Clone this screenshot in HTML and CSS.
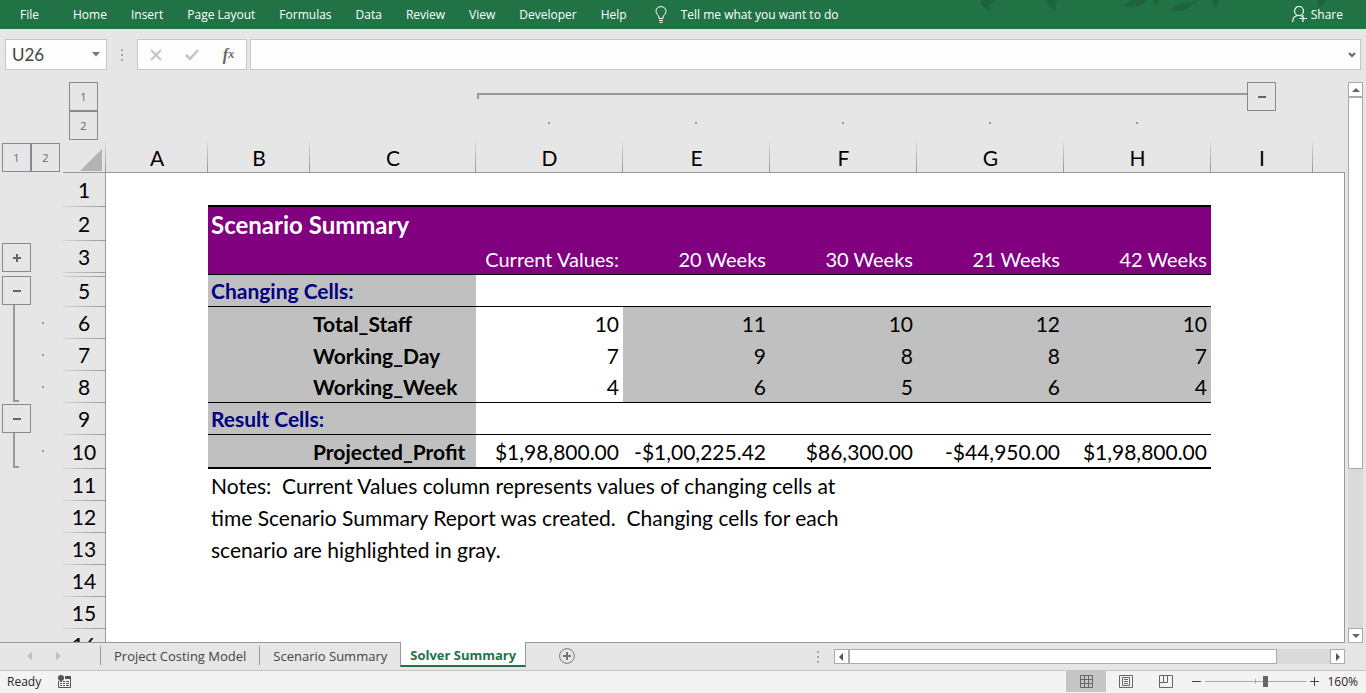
FILE: index.html
```html
<!DOCTYPE html>
<html lang="en">
<head>
<meta charset="utf-8">
<title>Solver Summary</title>
<link rel="stylesheet" href="styles.css">
</head>
<body>
<nav class="ribbon" aria-label="Ribbon">
  <button class="file">File</button>
  <button>Home</button>
  <button>Insert</button>
  <button>Page Layout</button>
  <button>Formulas</button>
  <button>Data</button>
  <button>Review</button>
  <button>View</button>
  <button>Developer</button>
  <button>Help</button>
  <button class="tell">
    <svg width="12" height="17" viewBox="0 0 12 17" fill="none" stroke="#fff"><path d="M4 12.5V11C3.500 9 1 8 1 5.300C1 2.500 3 .6 6 .6S11 2.500 11 5.300C11 8 8.500 9 8 11v1.500zM4 14.500h4M4.500 16.400h3" /></svg>
    Tell me what you want to do
  </button>
  <svg class="leaves" width="350" height="12" viewBox="0 0 350 12" fill="#1e6440" aria-hidden="true">
    <path d="M3 0h15c-1 3-4 3-7 5l2 6C7 9 2 6 3 0zM69 0h10l-2 11c-5-3-8-6-8-11zM144 5c6-1 6-5 13-5h12c-3 6-14 9-25 5zM174 0h7l-2 6zM190 10c6-1 7-6 15-7l9-1 4-2 2 1-6 4c-4 6-14 7-24 5zM234 0h7l-3 9c-3-3-5-6-4-9zM340 0h8c-1 4-4 5-8 8z"/>
  </svg>
  <button class="share">
    <svg width="15" height="17" viewBox="0 0 15 17" fill="none" stroke="#fff" stroke-width="1.200"><ellipse cx="7" cy="5" rx="4.500" ry="4.500"/><path d="M.6 16c0-4 2-6 5-6.500M8.500 9.500l1.500 1M11 9v7M7.500 12.500H15"/></svg>
    Share
  </button>
</nav>

<div class="formula-bar">
  <div class="name-box">
    <input aria-label="Name box" value="U26">
    <button aria-label="Name list"><svg width="8" height="5" viewBox="0 0 8 5"><path d="M0 0h8L4 4.500z" fill="#777"/></svg></button>
  </div>
  <svg class="grip" width="2" height="12" viewBox="0 0 2 12" fill="#a6a6a6"><path d="M0 0h2v2H0zM0 5h2v2H0zM0 10h2v2H0z"/></svg>
  <div class="entry-tools">
    <button aria-label="Cancel"><svg width="12" height="12" viewBox="0 0 12 12"><path d="M1 1l10 10M11 1L1 11" stroke="#c4c4c4" stroke-width="2"/></svg></button>
    <button aria-label="Enter"><svg width="14" height="12" viewBox="0 0 14 12"><path d="M1 6l4 4 8-9" fill="none" stroke="#c4c4c4" stroke-width="2.500"/></svg></button>
    <button class="fx" aria-label="Insert function">f<sub>x</sub></button>
  </div>
  <div class="formula">
    <input aria-label="Formula bar">
    <button aria-label="Expand formula bar"><svg width="8" height="6" viewBox="0 0 8 6"><path d="M1 1l3 3 3-3" fill="none" stroke="#666" stroke-width="2"/></svg></button>
  </div>
</div>

<main class="workspace">
  <div class="corner"></div>
  <div class="col-outline">
    <div class="levels stacked"><button>1</button><button>2</button></div>
    <div class="bracket"><i></i><button class="toggle" aria-label="Collapse columns">
      <svg width="9" height="9" viewBox="0 0 9 9"><path d="M1 4h8v2H1z" fill="#666"/></svg></button></div>
    <b class="dot d"></b><b class="dot e"></b><b class="dot f"></b><b class="dot g"></b><b class="dot h"></b>
  </div>
  <div class="row-outline">
    <div class="levels"><button>1</button><button>2</button></div>
    <div class="row-groups">
      <div class="toggles">
        <button class="toggle" aria-label="Expand row 4"><svg width="9" height="9" viewBox="0 0 9 9"><path d="M1 4h8v2H1zM4 1h2v8H4z" fill="#666"/></svg></button>
        <button class="toggle" aria-label="Collapse rows 6 to 8"><svg width="9" height="9" viewBox="0 0 9 9"><path d="M1 4h8v2H1z" fill="#666"/></svg></button>
        <i class="long"></i>
        <button class="toggle" aria-label="Collapse row 10"><svg width="9" height="9" viewBox="0 0 9 9"><path d="M1 4h8v2H1z" fill="#666"/></svg></button>
        <i class="short"></i>
      </div>
      <div class="row-dots"><b class="dot"></b><b class="dot"></b><b class="dot"></b><b class="dot"></b></div>
    </div>
  </div>
  <div class="sheet">
    <table>
      <colgroup><col class="w-head"><col class="w-a"><col class="w-a"><col class="w-c"><col class="w-d"><col class="w-d"><col class="w-d"><col class="w-d"><col class="w-d"><col class="w-a"><col></colgroup>
      <thead>
        <tr><th class="select-all"><svg width="22" height="22" viewBox="0 0 22 22"><path d="M22 0v22H0z" fill="#b3b3b3"/></svg></th><th>A</th><th>B</th><th>C</th><th>D</th><th>E</th><th>F</th><th>G</th><th>H</th><th>I</th><th class="rest"></th></tr>
      </thead>
      <tbody>
        <tr class="tall line2"><th>1</th><td></td><td class="u" colspan="7"></td><td colspan="2"></td></tr>
        <tr class="tall"><th>2</th><td></td><td class="title" colspan="7">Scenario Summary</td><td colspan="2"></td></tr>
        <tr class="names"><th>3</th><td></td><td class="p" colspan="2"></td><td class="p">Current Values:</td><td class="p">20 Weeks</td><td class="p">30 Weeks</td><td class="p">21 Weeks</td><td class="p">42 Weeks</td><td colspan="2"></td></tr>
        <tr class="hidden-row line"><th></th><td></td><td class="p u" colspan="7"></td><td colspan="2"></td></tr>
        <tr class="line after-hidden"><th>5</th><td></td><td class="section u" colspan="2">Changing Cells:</td><td class="u" colspan="5"></td><td colspan="2"></td></tr>
        <tr><th>6</th><td></td><td class="s"></td><td class="s label">Total_Staff</td><td>10</td><td class="s">11</td><td class="s">10</td><td class="s">12</td><td class="s">10</td><td colspan="2"></td></tr>
        <tr><th>7</th><td></td><td class="s"></td><td class="s label">Working_Day</td><td>7</td><td class="s">9</td><td class="s">8</td><td class="s">8</td><td class="s">7</td><td colspan="2"></td></tr>
        <tr class="line"><th>8</th><td></td><td class="s u"></td><td class="s label u">Working_Week</td><td class="u">4</td><td class="s u">6</td><td class="s u">5</td><td class="s u">6</td><td class="s u">4</td><td colspan="2"></td></tr>
        <tr class="line"><th>9</th><td></td><td class="section u" colspan="2">Result Cells:</td><td class="u" colspan="5"></td><td colspan="2"></td></tr>
        <tr class="tall line2"><th>10</th><td></td><td class="s u"></td><td class="s label u">Projected_Profit</td><td class="u">$1,98,800.00</td><td class="u">-$1,00,225.42</td><td class="u">$86,300.00</td><td class="u">-$44,950.00</td><td class="u">$1,98,800.00</td><td colspan="2"></td></tr>
        <tr><th>11</th><td></td><td class="note" colspan="9">Notes:&nbsp; Current Values column represents values of changing cells at</td></tr>
        <tr><th>12</th><td></td><td class="note" colspan="9">time Scenario Summary Report was created.&nbsp; Changing cells for each</td></tr>
        <tr><th>13</th><td></td><td class="note" colspan="9">scenario are highlighted in gray.</td></tr>
        <tr><th>14</th><td colspan="10"></td></tr>
        <tr><th>15</th><td colspan="10"></td></tr>
        <tr><th>16</th><td colspan="10"></td></tr>
      </tbody>
    </table>
  </div>
  <div class="vscroll">
    <button aria-label="Scroll up"><svg width="8" height="4" viewBox="0 0 8 4"><path d="M0 4h8L4 0z" fill="#666"/></svg></button>
    <div class="track"><span class="thumb"></span></div>
    <button aria-label="Scroll down"><svg width="8" height="4" viewBox="0 0 8 4"><path d="M0 0h8L4 4z" fill="#666"/></svg></button>
  </div>
</main>

<div class="tab-bar">
  <div class="tab-arrows">
    <button aria-label="Previous sheet"><svg width="5" height="8" viewBox="0 0 5 8"><path d="M5 0v8L0 4z" fill="#bcbcbc"/></svg></button>
    <button aria-label="Next sheet"><svg width="5" height="8" viewBox="0 0 5 8"><path d="M0 0v8l5-4z" fill="#bcbcbc"/></svg></button>
  </div>
  <button class="tab">Project Costing Model</button>
  <button class="tab">Scenario Summary</button>
  <button class="tab active">Solver Summary</button>
  <button class="add" aria-label="New sheet"><svg width="16" height="16" viewBox="0 0 16 16" fill="none" stroke="#777"><circle cx="8" cy="8" r="7.400"/><path d="M4 8h8M8 4v8" stroke-width="2"/></svg></button>
  <svg class="grip tab-grip" width="2" height="12" viewBox="0 0 2 12" fill="#a6a6a6"><path d="M0 0h2v2H0zM0 5h2v2H0zM0 10h2v2H0z"/></svg>
  <div class="hscroll">
    <button aria-label="Scroll left"><svg width="4" height="8" viewBox="0 0 4 8"><path d="M4 0v8L0 4z" fill="#555"/></svg></button>
    <div class="track"><span class="thumb"></span></div>
    <button aria-label="Scroll right"><svg width="4" height="8" viewBox="0 0 4 8"><path d="M0 0v8l4-4z" fill="#555"/></svg></button>
  </div>
</div>

<footer class="status">
  <span class="ready">Ready</span>
  <button class="macro" aria-label="Record macro"><svg width="13" height="13" viewBox="0 0 13 13"><path d="M.5 6v6.500h12V3" fill="none" stroke="#555"/><path d="M7 1h6v3H7zM2 6h2v1H2zM5 6h2v1H5zM8 6h3v1H8zM2 8h2v1H2zM5 8h2v1H5zM8 8h3v1H8zM2 10h2v1H2zM5 10h2v1H5zM8 10h3v1H8z" fill="#555"/><circle cx="3" cy="3" r="3" fill="#555"/></svg></button>
  <div class="views">
    <button class="on" aria-label="Normal view"><svg width="13" height="13" viewBox="0 0 13 13" fill="none" stroke="#666"><path d="M.5.5h12v12H.5zM.5 4.500h12M.5 8.500h12M4.500.5v12M8.500.5v12"/></svg></button>
    <button aria-label="Page layout view"><svg width="14" height="13" viewBox="0 0 14 13" fill="none" stroke="#666"><path d="M.5.5h13v12H.5zM3.500 2.500h7v8h-7zM5 4.500h4M5 6.500h4M5 8.500h4"/></svg></button>
    <button aria-label="Page break view"><svg width="14" height="13" viewBox="0 0 14 13" fill="none" stroke="#666"><path d="M.5.5h13v12H.5zM.5 7.500h8v-7M4.500.5v7"/></svg></button>
  </div>
  <div class="zoom">
    <button aria-label="Zoom out"><svg width="9" height="9" viewBox="0 0 9 9"><path d="M0 4.500h9" stroke="#444"/></svg></button>
    <input type="range" min="0" max="100" value="60" aria-label="Zoom">
    <button aria-label="Zoom in"><svg width="9" height="9" viewBox="0 0 9 9"><path d="M0 4.500h9M4.500 0v9" stroke="#444"/></svg></button>
    <span>160%</span>
  </div>
</footer>
</body>
</html>
```
FILE: styles.css
```css
* { box-sizing: border-box; }

body {
  margin: 0;
  height: 100vh;
  display: flex;
  flex-direction: column;
  background: #e6e6e6;
  color: #000;
  font-family: "Open Sans", "Noto Sans", sans-serif;
  font-size: 12px;
  overflow: hidden;
}

button, input {
  margin: 0;
  padding: 0;
  border: 0;
  background: none;
  color: inherit;
  font: inherit;
}

button {
  display: flex;
  align-items: center;
  justify-content: center;
  white-space: nowrap;
}

svg { display: block; flex: none; }

/* Ribbon */
.ribbon {
  flex: none;
  height: 29px;
  display: flex;
  align-items: center;
  gap: 24px;
  padding: 0 23px 1px 20px;
  background: #217346;
  color: #fff;
}
.file { margin-right: 10px; }
.tell { gap: 14px; margin-left: 4px; }
.leaves { align-self: flex-start; margin-left: auto; }
.share { gap: 4px; margin-left: -60px; }

/* Formula bar */
.formula-bar {
  flex: none;
  display: flex;
  align-items: center;
  padding: 10px 5px 0;
}
.name-box, .entry-tools, .formula {
  height: 31px;
  display: flex;
  align-items: center;
  background: #fdfdfd;
  border: 1px solid #c6c6c6;
}
.name-box { width: 102px; padding: 0 6px; }
.name-box input {
  flex: 1;
  min-width: 0;
  color: #444;
  font: 17px "Lato", sans-serif;
}
.grip { margin: 0 14px; }
.entry-tools { width: 110px; justify-content: space-around; margin-right: 3px; }
.fx { color: #666; font: italic bold 16px "Liberation Serif", serif; }
.fx sub { font-size: 12px; }
.formula { flex: 1; padding: 0 4px; }
.formula input { flex: 1; height: 100%; }

/* Worksheet area */
.workspace {
  flex: 1;
  min-height: 0;
  display: grid;
  grid-template: 73px minmax(0, 1fr) / 63px minmax(0, 1fr) 21px;
}
.col-outline {
  display: grid;
  grid-template: 29px 1fr / 43px 102px 102px 166px repeat(5, 147px) 102px 1fr;
  padding-top: 12px;
}
.levels { display: flex; color: #666; font-size: 11px; }
.stacked { flex-direction: column; grid-row: 1 / 3; padding-left: 6px; }
.levels button, .toggle {
  flex: none;
  width: 29px;
  height: 29px;
  border: 1px solid #848992;
}
.bracket {
  grid-column: 5 / 11;
  display: flex;
  padding: 0 37px 0 1px;
}
.bracket i {
  flex: 1;
  height: 6px;
  margin-top: 11px;
  border-top: 2px solid #999;
  border-left: 2px solid #999;
}
.dot { display: block; width: 2px; height: 2px; background: #999; }
.col-outline .dot { grid-row: 2; justify-self: center; margin: 11px 2px 0 0; }
.d { grid-column: 5; }
.e { grid-column: 6; }
.f { grid-column: 7; }
.g { grid-column: 8; }
.h { grid-column: 9; }

.row-outline {
  padding-left: 2px;
  border-bottom: 1px solid #999;
  overflow: hidden;
}
.row-groups { display: flex; padding-top: 71px; gap: 11px; }
.toggles { width: 29px; }
.toggles .toggle + .toggle { margin-top: 4px; }
.toggles i {
  display: block;
  width: 6px;
  margin: 0 0 2px 11px;
  border-left: 2px solid #999;
  border-bottom: 2px solid #999;
}
.long { height: 97px; }
.short { height: 35px; }
.row-dots { display: grid; gap: 30px; align-content: start; padding-top: 79px; }
.row-dots .dot:last-child { margin-top: 32px; }

.sheet { overflow: hidden; border-bottom: 1px solid #999; }
table {
  width: 100%;
  table-layout: fixed;
  border-collapse: separate;
  border-spacing: 0;
  font: 21px/26px "Lato", sans-serif;
}
.w-head { width: 43px; }
.w-a { width: 102px; }
.w-c { width: 166px; }
.w-d { width: 147px; }
th, td { padding: 0; white-space: nowrap; }
th { font-weight: 400; }
thead th {
  height: 30px;
  border-bottom: 1px solid #999;
  background: linear-gradient(#d4d4d4, #999) right / 1px 100% no-repeat #e6e6e6;
}
.select-all svg { margin: 4px 0 0 17px; }
thead .rest { background: #e6e6e6; }
tbody tr { height: 32px; }
tbody .tall { height: 34px; }
tbody .hidden-row { height: 2px; line-height: 0; }
tbody th {
  border-right: 1px solid #999;
  background: linear-gradient(90deg, #d4d4d4, #999) bottom / 100% 1px no-repeat #e6e6e6;
}
tbody .hidden-row th { background: #e6e6e6; }
.after-hidden th {
  background:
    linear-gradient(90deg, #d4d4d4, #999) 0 1px / 100% 1px no-repeat,
    linear-gradient(90deg, #d4d4d4, #999) bottom / 100% 1px no-repeat #e6e6e6;
}
td { padding: 1px 4px 0 3px; background: #fff; text-align: right; }
td:last-child { border-right: 1px solid #999; }
.hidden-row td { padding: 0; }
.line .u { border-bottom: 1px solid #000; }
.line2 .u { border-bottom: 2px solid #000; }
.p, .title { background: purple; color: #fff; }
.names .p { font-size: 20px; padding-top: 4px; }
.title, .section, .label { text-align: left; font-weight: 700; }
.title { font-size: 24px; }
.s, .section { background: #c0c0c0; }
.section { color: navy; }
.note { text-align: left; }

/* Scroll bars */
.vscroll {
  grid-area: 1 / 3 / 3 / 4;
  display: flex;
  flex-direction: column;
  padding: 12px 3px 0;
}
.vscroll button, .hscroll button {
  flex: none;
  width: 15px;
  height: 15px;
  background: #fff;
  border: 1px solid #ababab;
}
.track { flex: 1; display: flex; background: #dadada; }
.thumb { background: #fff; border: 1px solid #ababab; }
.vscroll .track { flex-direction: column; }
.vscroll .thumb { height: 70%; }
.hscroll .thumb { width: 89%; }

/* Sheet tabs */
.tab-bar {
  flex: none;
  height: 27px;
  display: flex;
  align-items: flex-start;
  padding-right: 21px;
  color: #444;
  font-size: 13px;
}
.tab-arrows { display: flex; width: 100px; height: 26px; padding-left: 27px; gap: 24px; }
.tab {
  height: 19px;
  margin-top: 3px;
  padding: 0 13px;
  border-left: 1px solid #999;
}
.tab.active {
  height: 25px;
  margin-top: -1px;
  padding: 2px 9px 0;
  background: #fff;
  border-right: 1px solid #999;
  border-bottom: 2px solid #217346;
  color: #217346;
  font-weight: 700;
}
.add { height: 26px; margin-left: 33px; }
.tab-grip { margin: 8px 15px 0 auto; }
.hscroll { display: flex; width: 38%; margin-top: 6px; }

/* Status bar */
.status {
  flex: none;
  height: 23px;
  display: flex;
  align-items: center;
  padding: 0 8px 1px 7px;
  background: #f3f3f3;
  border-top: 1px solid #c6c6c6;
  color: #262626;
}
.macro { margin-left: 17px; }
.views { display: flex; height: 100%; margin-left: auto; }
.views button { width: 40px; }
.views .on { background: #c6c6c6; }
.zoom { display: flex; align-items: center; gap: 4px; padding-left: 6px; }
.zoom span { padding-left: 4px; }
.zoom input {
  width: 101px;
  height: 12px;
  appearance: none;
  background:
    linear-gradient(#ababab, #ababab) center / 1px 5px no-repeat,
    linear-gradient(#ababab, #ababab) center / 100% 1px no-repeat;
}
.zoom input::-webkit-slider-thumb {
  appearance: none;
  width: 5px;
  height: 11px;
  background: #666;
}
```
